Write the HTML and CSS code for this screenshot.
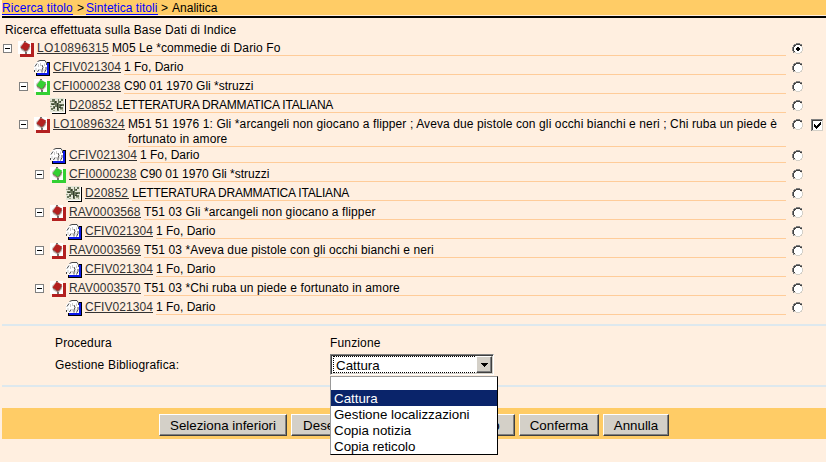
FILE: index.html
```
<!DOCTYPE html>
<html lang="it">
<head>
<meta charset="utf-8">
<title>Analitica</title>
<link rel="stylesheet" href="styles.css">
</head>
<body>
<svg class="defs" width="0" height="0" aria-hidden="true">
  <symbol id="book" viewBox="0 0 16 16">
    <path d="M2 2H16V16H2Z" fill="currentColor"/>
    <path d="M0 0H13V13H0Z" fill="#fff"/>
    <path d="M7 0L12 4V8L8 12L3 9L2 5Z" fill="#c9bdb8"/>
    <path d="M6.500 1L12 3.500L10 9L7.500 10L2.500 6.500Z" fill="currentColor"/>
    <path d="M3 7L8 10.500L12 5" fill="none" stroke="#7a5550" stroke-width=".8"/>
    <path d="M6 0H8V1H6ZM7 11H9V13H7Z" fill="#555" fill-opacity=".8"/>
  </symbol>
  <symbol id="author" viewBox="0 0 16 16">
    <path d="M13 2H16V16H2V13H13Z" fill="#000"/>
    <path d="M13 3H15V15H3V13H13Z" fill="#0a18ea"/>
    <path d="M0 5L4 1L7 0H11L13 2V13H4L0 12Z" fill="#fff"/>
    <path d="M3.500 1.500L6 .5H11L12.500 3V5M3 3.500L1 6.500M.5 10V12M5 9.500L3.500 12M8 5L9 7.500L8 10V12.500M12 7V9.500L10.500 12.500" fill="none" stroke="#333" stroke-width=".9"/>
    <path d="M4.500 4V7M6.500 3V6M6.500 9L6 11.500M10.500 3.500V6M10 9V11M2 8V11" fill="none" stroke="#c4c4c4" stroke-width=".9"/>
  </symbol>
  <symbol id="subject" viewBox="0 0 16 16" shape-rendering="crispEdges">
    <path d="M15 1H16V16H2V15H15Z" fill="#000"/>
    <path d="M0 0H14V14H0Z" fill="#e4e6d8"/>
    <path d="M14 1H15V15H2V14H14Z" fill="#fff"/>
    <path d="M2 1H5V3H7V5H8V1H9V3H11V1H13V3H11V5H9V6H14V8H11V9H13V11H10V10H9V13H7V9H5V11H3V12H1V10H3V8H5V7H1V5H4V4H2Z" fill="#68755a"/>
    <path d="M5 3H6V5H5ZM7 5H8V12H7ZM2 6H4V7H2ZM10 3H11V4H10ZM10 7H12V8H10ZM4 9H5V10H4ZM9 9H11V10H9Z" fill="#333d2c"/>
    <path d="M0 3H2V4H0ZM10 11H13V13H12V12H10ZM3 12H5V13H3ZM0 8H2V9H0Z" fill="#a1a88d"/>
  </symbol>
  <symbol id="minus" viewBox="0 0 9 9" shape-rendering="crispEdges">
    <path d="M0 0H9V9H0Z" fill="#808080"/>
    <path d="M1 1H8V8H1Z" fill="#fff"/>
    <path d="M2 4H7V5H2Z" fill="#000"/>
  </symbol>
  <symbol id="radio" viewBox="0 0 12 12" shape-rendering="crispEdges">
    <path d="M4 1H8V2H10V4H11V8H10V10H8V11H4V10H2V8H1V4H2V2H4Z" fill="#fff"/>
    <path d="M4 0H8V1H10V2H8V1H4V2H2V4H1V8H2V10H1V8H0V4H1V2H2V1H4Z" fill="#808080"/>
    <path d="M4 1H8V2H10V3H8V2H4V3H3V4H2V8H3V9H2V8H1V4H2V2H4Z" fill="#404040"/>
    <path d="M9 3H10V4H11V8H10V10H8V11H4V10H2V9H4V10H8V9H9V8H10V4H9Z" fill="#d4d0c8"/>
  </symbol>
  <symbol id="dot" viewBox="0 0 12 12" shape-rendering="crispEdges">
    <path d="M5 4H7V5H8V7H7V8H5V7H4V5H5Z" fill="#000"/>
  </symbol>
</svg>

<nav class="crumbs"><a href="#" class="c1">Ricerca titolo</a><span class="s1">&gt;</span><a href="#" class="c2">Sintetica titoli</a><span class="s2">&gt;</span><span class="c3">Analitica</span></nav>
<p class="intro">Ricerca effettuata sulla Base Dati di Indice</p>

<main class="tree">
  <div class="row l0"><svg class="tog"><use href="#minus"/></svg><svg class="ico red"><use href="#book"/></svg><a class="code lo">LO10896315</a><div class="label wide">M05 Le *commedie di Dario Fo</div><svg class="radio"><use href="#radio"/><use href="#dot"/></svg></div>
  <div class="row l1"><i class="tog"></i><svg class="ico"><use href="#author"/></svg><a class="code cfiv">CFIV021304</a><div class="label">1 Fo, Dario</div><svg class="radio"><use href="#radio"/></svg></div>
  <div class="row l1"><svg class="tog"><use href="#minus"/></svg><svg class="ico green"><use href="#book"/></svg><a class="code cfi">CFI0000238</a><div class="label">C90 01 1970 Gli *struzzi</div><svg class="radio"><use href="#radio"/></svg></div>
  <div class="row l2"><i class="tog"></i><svg class="ico"><use href="#subject"/></svg><a class="code d">D20852</a><div class="label caps">LETTERATURA DRAMMATICA ITALIANA</div><svg class="radio"><use href="#radio"/></svg></div>
  <div class="row l1 tall"><svg class="tog"><use href="#minus"/></svg><svg class="ico red"><use href="#book"/></svg><a class="code lo">LO10896324</a><div class="label wide">M51 51 1976 1: Gli *arcangeli non giocano a flipper ; Aveva due pistole con gli occhi bianchi e neri ; Chi ruba un piede è<br>fortunato in amore</div><svg class="radio"><use href="#radio"/></svg>
    <svg class="check" viewBox="0 0 12 12" shape-rendering="crispEdges"><path d="M0 0H12V12H0Z" fill="#d4d0c8"/><path d="M0 0H12V1H1V12H0Z" fill="#808080"/><path d="M1 1H11V2H2V11H1Z" fill="#404040"/><path d="M2 2H11V11H2Z" fill="#fff"/><path d="M3 5H4V6H5V7H6V6H7V5H8V4H9V3H10V6H9V7H8V8H7V9H6V10H5V9H4V8H3Z"/></svg></div>
  <div class="row l2"><i class="tog"></i><svg class="ico"><use href="#author"/></svg><a class="code cfiv">CFIV021304</a><div class="label">1 Fo, Dario</div><svg class="radio"><use href="#radio"/></svg></div>
  <div class="row l2"><svg class="tog"><use href="#minus"/></svg><svg class="ico green"><use href="#book"/></svg><a class="code cfi">CFI0000238</a><div class="label">C90 01 1970 Gli *struzzi</div><svg class="radio"><use href="#radio"/></svg></div>
  <div class="row l3"><i class="tog"></i><svg class="ico"><use href="#subject"/></svg><a class="code d">D20852</a><div class="label caps">LETTERATURA DRAMMATICA ITALIANA</div><svg class="radio"><use href="#radio"/></svg></div>
  <div class="row l2"><svg class="tog"><use href="#minus"/></svg><svg class="ico red"><use href="#book"/></svg><a class="code rav">RAV0003568</a><div class="label wide">T51 03 Gli *arcangeli non giocano a flipper</div><svg class="radio"><use href="#radio"/></svg></div>
  <div class="row l3"><i class="tog"></i><svg class="ico"><use href="#author"/></svg><a class="code cfiv">CFIV021304</a><div class="label">1 Fo, Dario</div><svg class="radio"><use href="#radio"/></svg></div>
  <div class="row l2"><svg class="tog"><use href="#minus"/></svg><svg class="ico red"><use href="#book"/></svg><a class="code rav">RAV0003569</a><div class="label wide">T51 03 *Aveva due pistole con gli occhi bianchi e neri</div><svg class="radio"><use href="#radio"/></svg></div>
  <div class="row l3"><i class="tog"></i><svg class="ico"><use href="#author"/></svg><a class="code cfiv">CFIV021304</a><div class="label">1 Fo, Dario</div><svg class="radio"><use href="#radio"/></svg></div>
  <div class="row l2"><svg class="tog"><use href="#minus"/></svg><svg class="ico red"><use href="#book"/></svg><a class="code rav">RAV0003570</a><div class="label wide">T51 03 *Chi ruba un piede e fortunato in amore</div><svg class="radio"><use href="#radio"/></svg></div>
  <div class="row l3"><i class="tog"></i><svg class="ico"><use href="#author"/></svg><a class="code cfiv">CFIV021304</a><div class="label">1 Fo, Dario</div><svg class="radio"><use href="#radio"/></svg></div>
</main>

<section class="form">
  <div class="head">Procedura</div><div class="head">Funzione</div>
  <div class="name">Gestione Bibliografica:</div>
  <div class="select">
    <div class="value">Cattura</div>
    <div class="arrow"><svg width="7" height="4" viewBox="0 0 7 4" shape-rendering="crispEdges"><path d="M0 0H7V1H6V2H5V3H4V4H3V3H2V2H1V1H0Z"/></svg></div>
    <ul class="menu"><li class="blank"></li><li class="on">Cattura</li><li>Gestione localizzazioni</li><li>Copia notizia</li><li>Copia reticolo</li></ul>
  </div>
</section>

<footer class="bar">
  <button class="b1">Seleziona inferiori</button><button class="b2">Deseleziona inferiori</button><button class="b3">Indietro</button><button class="b4">Conferma</button><button class="b5">Annulla</button>
</footer>
</body>
</html>
```
FILE: styles.css
```
* { box-sizing: border-box; }
body {
  margin: 0;
  width: 826px;
  height: 462px;
  overflow: hidden;
  background: #ffefe0;
  color: #000;
  font: 12px/15px "Liberation Sans", Arial, sans-serif;
}
.defs { display: block; }
.crumbs {
  display: flex;
  height: 18px;
  margin-left: 2px;
  padding-top: 1px;
  background: linear-gradient(#ffcc66 15px, #ffefe0 15px, #ffefe0 16px, #000 16px);
  line-height: 15px;
}
.crumbs a { color: #00f; height: 14px; text-decoration: none; border-bottom: 1px solid #00f; white-space: nowrap; }
.c1 { width: 71px; letter-spacing: .1px; }
.c2 { width: 72px; letter-spacing: .05px; }
.s1 { margin: 0 2px 0 4px; }
.s2 { margin: 0 4px 0 3px; }
.intro { margin: 5px 0 0 5px; height: 14px; letter-spacing: .14px; }
.tree { display: flex; flex-direction: column; }
.row { display: flex; height: 19px; align-items: flex-start; padding-left: 3px; }
.l1 { padding-left: 19px; }
.l2 { padding-left: 35px; }
.l3 { padding-left: 51px; }
.tog { flex: none; width: 9px; height: 9px; margin: 7px 6px 0 0; }
.ico { flex: none; width: 16px; height: 16px; margin: 4px 3px 0 0; }
.red { color: #b32020; }
.green { color: #33d033; }
.code {
  flex: none;
  height: 14px;
  margin: 3px 3px 0 0;
  padding-top: 1px;
  border-bottom: 1px solid #333;
  color: #333;
  white-space: nowrap;
}
.lo { width: 72px; letter-spacing: .25px; }
.cfiv { width: 68px; letter-spacing: .05px; }
.cfi { width: 68px; letter-spacing: .15px; }
.d { width: 44px; letter-spacing: .2px; }
.rav { width: 72px; letter-spacing: .1px; }
.label {
  flex: 1;
  height: 16px;
  margin-top: 3px;
  padding-top: 1px;
  border-bottom: 1px solid #ffcc99;
  white-space: nowrap;
}
.wide { letter-spacing: .11px; }
.caps { letter-spacing: -.2px; }
.radio { flex: none; width: 12px; height: 12px; margin: 6px 22px 0 6px; }
.tall { position: relative; height: 31px; }
.tall .label { height: 31px; }
.check { position: absolute; left: 811px; top: 6px; width: 12px; height: 12px; }
.form {
  display: grid;
  grid-template-columns: 275px 164px;
  grid-template-rows: 19px 21px;
  row-gap: 2px;
  height: 63px;
  margin: 9px 0 0 2px;
  padding: 7px 0 0 53px;
  border-top: 2px solid #dde8ee;
  border-bottom: 2px solid #dde8ee;
}
.head { line-height: 21px; letter-spacing: .15px; }
.name { line-height: 22px; letter-spacing: .18px; }
.select {
  position: relative;
  display: flex;
  height: 21px;
  padding: 2px;
  border: 1px solid;
  border-color: #808080 #fff #fff #808080;
  background: #fff;
  box-shadow: inset 1px 1px #404040, inset -1px -1px #d4d0c8;
  font-size: 13.33px;
}
.value { flex: 1; border: 1px dotted #000; line-height: 17px; padding-left: 2px; margin: -1px 0; }
.arrow {
  display: grid;
  place-items: center;
  width: 16px;
  margin: -1px;
  background: #d4d0c8;
  border: 1px solid;
  border-color: #fff #404040 #404040 #fff;
  box-shadow: inset -1px -1px #808080;
}
.menu {
  position: absolute;
  z-index: 2;
  left: -1px;
  top: 21px;
  width: 168px;
  height: 79px;
  margin: 0;
  padding: 0;
  border: 1px solid #000;
  border-color: #999 #000 #000 #999;
  background: #fff;
  list-style: none;
}
.menu li { height: 16px; line-height: 17px; padding-left: 3px; }
.menu .blank { height: 13px; }
.menu .on { background: #0a246a; color: #fff; }
.bar {
  display: flex;
  gap: 4px;
  height: 31px;
  margin: 21px 0 0 2px;
  padding: 6px 0 0 157px;
  background: #ffcc66;
}
.bar button {
  height: 22px;
  padding: 0;
  border: 1px solid;
  border-color: #fff #404040 #404040 #fff;
  background: #d4d0c8;
  box-shadow: inset -1px -1px #808080;
  color: #000;
  font: 13.33px "Liberation Sans", Arial, sans-serif;
  white-space: nowrap;
}
.b1 { width: 128px; }
.b2 { width: 145px; }
.b3 { width: 75px; }
.b4 { width: 80px; }
.b5 { width: 66px; }
```
